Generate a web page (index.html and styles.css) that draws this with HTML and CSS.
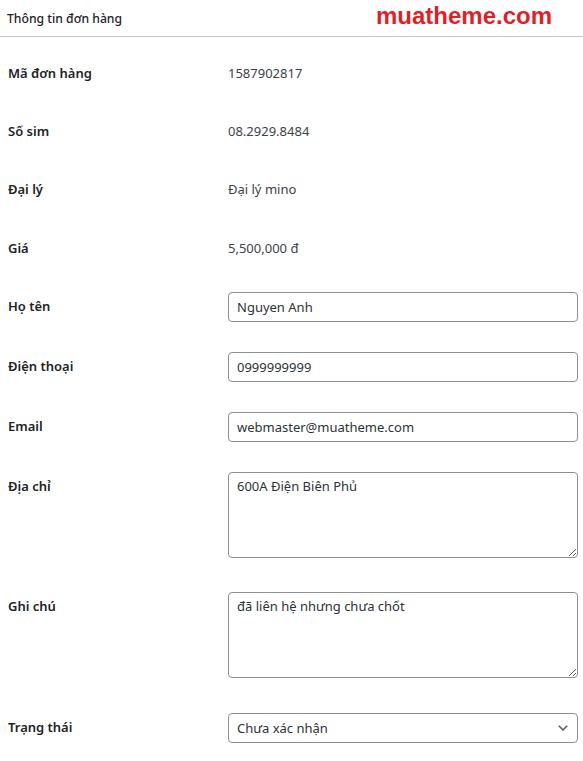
FILE: index.html
```html
<!DOCTYPE html>
<html lang="vi">
<head>
<meta charset="utf-8">
<title>Thông tin đơn hàng</title>
<link rel="stylesheet" href="styles.css">
</head>
<body>
<div class="postbox">
  <div class="postbox-header">
    <h2 class="hndle">Thông tin đơn hàng</h2>
  </div>
  <div class="inside">
    <table class="form-table">
      <tbody>
        <tr><th>Mã đơn hàng</th><td class="val">1587902817</td></tr>
        <tr><th>Số sim</th><td class="val">08.2929.8484</td></tr>
        <tr><th>Đại lý</th><td class="val">Đại lý mino</td></tr>
        <tr><th>Giá</th><td class="val">5,500,000 đ</td></tr>
        <tr><th>Họ tên</th><td><input class="field" type="text" value="Nguyen Anh"></td></tr>
        <tr><th>Điện thoại</th><td><input class="field" type="text" value="0999999999"></td></tr>
        <tr><th>Email</th><td><input class="field" type="text" value="webmaster@muatheme.com"></td></tr>
        <tr><th>Địa chỉ</th><td><textarea class="field area">600A Điện Biên Phủ</textarea></td></tr>
        <tr><th>Ghi chú</th><td><textarea class="field area">đã liên hệ nhưng chưa chốt</textarea></td></tr>
        <tr><th>Trạng thái</th><td>
          <div class="select-wrap">
            <select class="field select"><option>Chưa xác nhận</option><option>Đã xác nhận</option></select>
            <svg class="chev" width="10" height="6" viewBox="0 0 10 6"><path d="M0.8 0.8 L5 5 L9.2 0.8" fill="none" stroke="#50575e" stroke-width="1.5"/></svg>
          </div>
        </td></tr>
      </tbody>
    </table>
  </div>
  <div class="watermark">muatheme.com</div>
</div>
</body>
</html>
```
FILE: styles.css
```css
html, body {
  margin: 0;
  padding: 0;
  background: #fff;
}
body {
  font-family: "Noto Sans", "Open Sans", sans-serif;
  color: #1d2327;
  font-size: 13px;
}
.postbox {
  position: relative;
  width: 583px;
}
.postbox-header {
  height: 36px;
  border-bottom: 1px solid #c3c4c7;
  display: flex;
  align-items: center;
}
.hndle {
  margin: 0;
  padding: 2px 7px 0;
  font-size: 12.2px;
  font-weight: 500;
  color: #1d2327;
  line-height: 1;
}
.watermark {
  position: absolute;
  left: 376px;
  top: 4px;
  font-family: "Liberation Sans", Arial, sans-serif;
  font-weight: 700;
  font-size: 24px;
  color: #e21f26;
  line-height: 1;
}
.inside {
  padding: 0 0 0 8px;
}
.form-table {
  border-collapse: collapse;
  margin-top: 7px;
}
.form-table th {
  width: 200px;
  text-align: left;
  vertical-align: top;
  padding: 20px 10px 20px 0;
  font-weight: 600;
  font-size: 13px;
  line-height: 18.2px;
  color: #1d2327;
}
.form-table td {
  width: 350px;
  padding: 15px 0 15px 10px;
  vertical-align: middle;
  line-height: 18.2px;
}
.form-table td.val {
  padding-top: 20px;
  padding-bottom: 20px;
  vertical-align: top;
  color: #3c434a;
  font-size: 13px;
}
.field {
  box-sizing: border-box;
  width: 350px;
  height: 30px;
  border: 1px solid #8c8f94;
  border-radius: 4px;
  padding: 0 8px;
  font-family: "Noto Sans", "Open Sans", sans-serif;
  font-size: 13px;
  color: #2c3338;
  background: #fff;
  margin: 0;
  display: block;
}
.area {
  height: 86px;
  padding: 4px 8px;
  line-height: 18px;
  resize: vertical;
  margin-bottom: 4.5px;
}
.select-wrap {
  position: relative;
  width: 350px;
}
.select {
  appearance: none;
  -webkit-appearance: none;
  padding-right: 24px;
}
.chev {
  position: absolute;
  right: 10px;
  top: 12px;
  pointer-events: none;
}
```
